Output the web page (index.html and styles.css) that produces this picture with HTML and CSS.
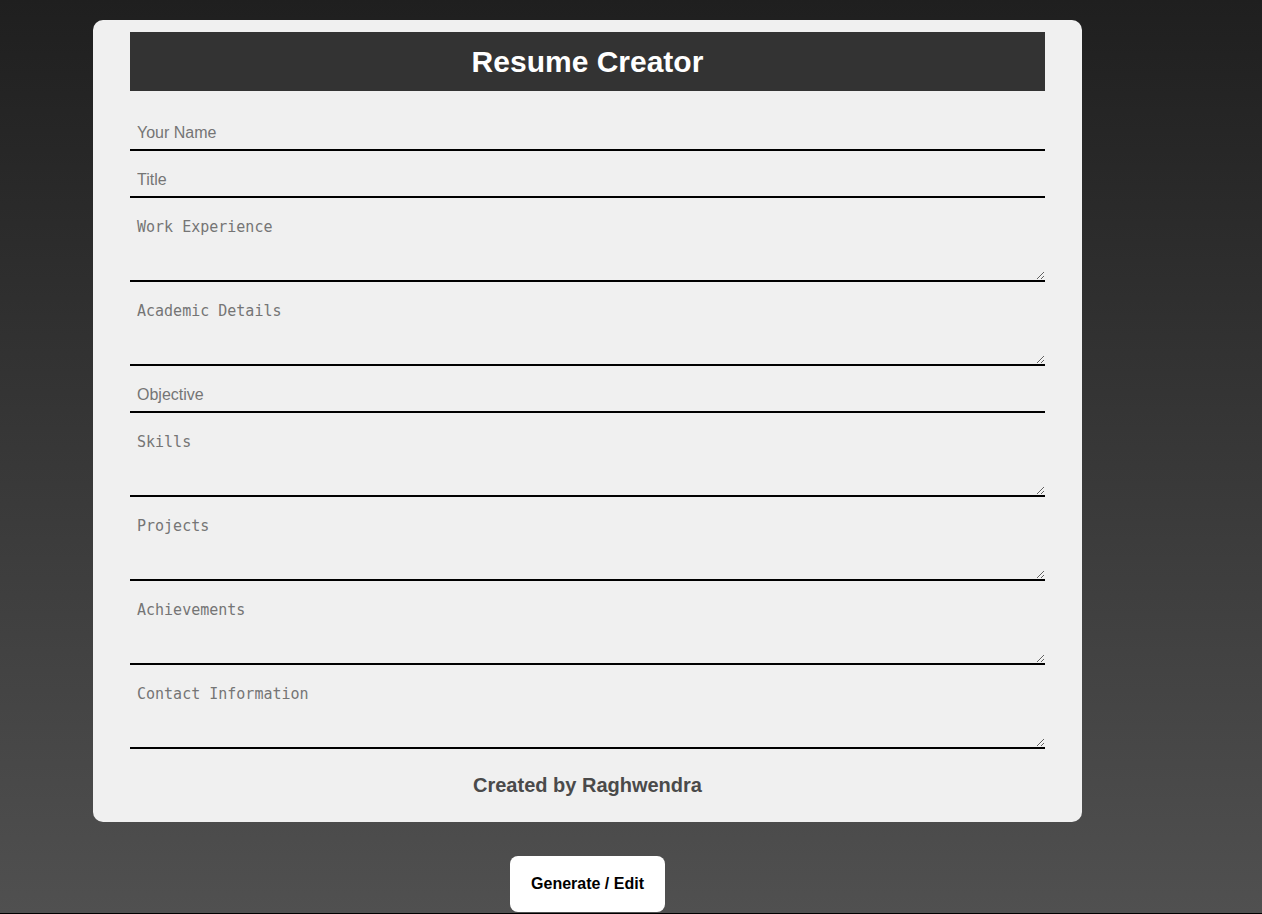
FILE: index.html
```html
<!DOCTYPE html>
<html lang="en">
<head>
<meta charset="utf-8">
<title>Resume Creator</title>
<link rel="stylesheet" href="styles.css">
</head>
<body>
<div class="page">
  <form class="card">
    <h1 class="card-title">Resume Creator</h1>
    <input class="field field-input" type="text" placeholder="Your Name">
    <input class="field field-input" type="text" placeholder="Title">
    <textarea class="field field-area" placeholder="Work Experience"></textarea>
    <textarea class="field field-area" placeholder="Academic Details"></textarea>
    <input class="field field-input" type="text" placeholder="Objective">
    <textarea class="field field-area" placeholder="Skills"></textarea>
    <textarea class="field field-area" placeholder="Projects"></textarea>
    <textarea class="field field-area" placeholder="Achievements"></textarea>
    <textarea class="field field-area field-last" placeholder="Contact Information"></textarea>
    <p class="credit">Created by Raghwendra</p>
  </form>
  <div class="actions">
    <button class="btn" type="button">Generate / Edit</button>
  </div>
</div>
</body>
</html>
```

FILE: styles.css
```css
html {
  background: #000;
}

body {
  margin: 0;
  height: 913px;
  background: linear-gradient(to bottom, #1f1f1f 0%, #505050 100%);
  font-family: "Liberation Sans", Arial, sans-serif;
}

.page {
  padding: 20px 0 0 93px;
  width: 989px;
}

.card {
  box-sizing: border-box;
  width: 989px;
  padding: 12px 37px 12px;
  background: #f0f0f0;
  border-radius: 10px;
  display: flex;
  flex-direction: column;
}

.card-title {
  margin: 0 0 23px;
  height: 59px;
  line-height: 59px;
  background: #333333;
  color: #ffffff;
  font-size: 30px;
  font-weight: bold;
  text-align: center;
}

.field {
  display: block;
  box-sizing: border-box;
  width: 100%;
  margin: 0 0 10px;
  border: 0;
  border-bottom: 2px solid #000;
  border-radius: 0;
  background: transparent;
  outline: none;
  color: #222;
}

.field::placeholder {
  color: #757575;
}

.field-input {
  height: 37px;
  padding: 2px 7px 0;
  font-family: "Liberation Sans", Arial, sans-serif;
  font-size: 16px;
}

.field-area {
  height: 74px;
  padding: 10px 7px;
  font-family: "DejaVu Sans Mono", monospace;
  font-size: 15px;
  resize: vertical;
}

.field-last {
  margin-bottom: 0;
}

.credit {
  margin: 25px 0 13px;
  line-height: 23px;
  text-align: center;
  font-size: 20px;
  font-weight: bold;
  color: #4a4a4a;
}

.actions {
  display: flex;
  justify-content: center;
  margin-top: 34px;
}

.btn {
  width: 155px;
  height: 56px;
  border: 0;
  border-radius: 8px;
  background: #ffffff;
  color: #000;
  font-family: "Liberation Sans", Arial, sans-serif;
  font-size: 16px;
  font-weight: bold;
  cursor: pointer;
}
```
